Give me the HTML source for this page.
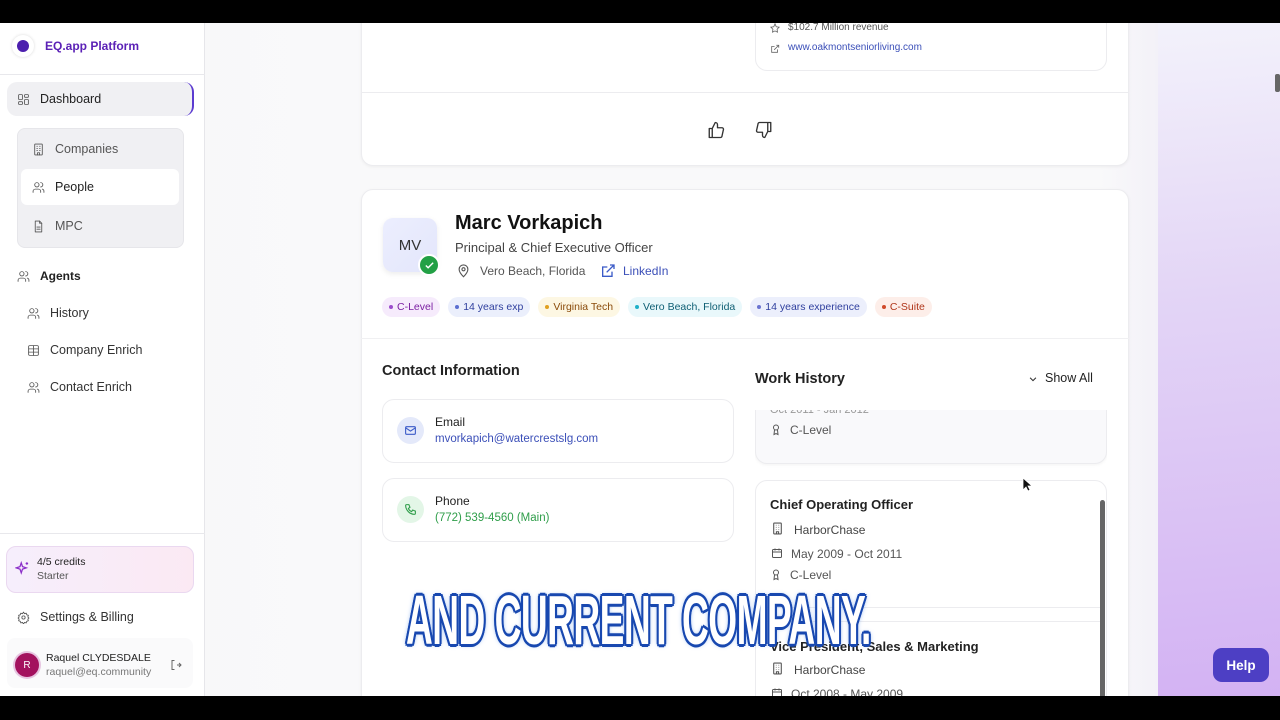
<!DOCTYPE html>
<html><head><meta charset="utf-8"><style>
*{box-sizing:border-box;margin:0;padding:0}
body{width:1280px;height:720px;overflow:hidden;background:#000;font-family:"Liberation Sans",sans-serif;position:relative;color:#111}
.abs{position:absolute}
#app{position:absolute;left:0;top:23px;width:1280px;height:673px;overflow:hidden;background:linear-gradient(90deg,#f7f7f8 0,#f9f9fa 330px,#f9f9fa 1100px,#f3f1f8 1158px)}
#right{position:absolute;left:1158px;top:0;width:122px;height:673px;background:linear-gradient(175deg,#f3f2fb 0%,#e3d5f6 40%,#d3b2f3 100%)}
#side{position:absolute;left:0;top:0;width:205px;height:673px;background:#fff;border-right:1px solid #e6e6ea}
.nav{position:absolute;display:flex;align-items:center;font-size:12.5px;color:#333}
.nav svg{margin-right:10px}
.card{position:absolute;background:#fff;border:1px solid #ececef;border-radius:12px;box-shadow:0 1px 3px rgba(0,0,0,.05)}
.tag{display:inline-flex;align-items:center;height:20px;padding:0 7px;border-radius:10px;font-size:10.5px;margin-right:8px}
.tag i{width:4px;height:4px;border-radius:50%;display:inline-block;margin-right:4px}
.ic{stroke:#555;fill:none;stroke-width:1.6;stroke-linecap:round;stroke-linejoin:round}
.cap{position:absolute;left:406px;top:584px;font-family:"Liberation Sans",sans-serif;font-weight:bold;font-size:70px;line-height:72px;color:#fff;letter-spacing:-1px;transform:scaleX(0.53);transform-origin:left;white-space:nowrap;
text-shadow:4px 0 #1848b0,-4px 0 #1848b0,0 3px #1848b0,0 -3px #1848b0,3px 2px #1848b0,-3px -2px #1848b0,3px -2px #1848b0,-3px 2px #1848b0,0 0 7px #3a7ae0}
</style></head><body>
<div id="app">
<div id="right"></div>
<div id="side">
  <div class="abs" style="left:12px;top:12px;width:22px;height:22px;border-radius:50%;background:#fff;box-shadow:0 0 3px rgba(0,0,0,.15);display:flex;align-items:center;justify-content:center"><div style="width:12px;height:12px;border-radius:50%;background:#4c1fae"></div></div>
  <div class="abs" style="left:45px;top:16px;font-size:12px;font-weight:bold;color:#5b21b6">EQ.app Platform</div>
  <div class="abs" style="left:0;top:51px;width:205px;border-top:1px solid #e8e8ec"></div>
  <div class="abs" style="left:7px;top:59px;width:187px;height:34px;background:#f0f0f3;border-radius:10px;border-right:2px solid #5b3bd0"></div>
  <div class="nav" style="left:17px;top:69px;color:#222"><svg width="13" height="13" viewBox="0 0 24 24" class="ic"><rect x="3" y="3" width="7" height="9" rx="1"/><rect x="14" y="3" width="7" height="5" rx="1"/><rect x="14" y="12" width="7" height="9" rx="1"/><rect x="3" y="16" width="7" height="5" rx="1"/></svg>Dashboard</div>
  <div class="abs" style="left:17px;top:105px;width:167px;height:120px;background:#f0f0f3;border:1px solid #e6e6ea;border-radius:8px"></div>
  <div class="abs" style="left:21px;top:146px;width:158px;height:36px;background:#fff;border-radius:6px"></div>
  <div class="nav" style="left:32px;top:119px;color:#555"><svg width="13" height="13" viewBox="0 0 24 24" class="ic"><rect x="5" y="2" width="14" height="20" rx="1"/><path d="M9 6h1M14 6h1M9 10h1M14 10h1M9 14h1M14 14h1M10 22v-4h4v4"/></svg>Companies</div>
  <div class="nav" style="left:32px;top:157px;color:#222"><svg width="13" height="13" viewBox="0 0 24 24" class="ic"><circle cx="9" cy="7" r="4"/><path d="M2 21v-2a4 4 0 0 1 4-4h6a4 4 0 0 1 4 4v2M16 3a4 4 0 0 1 0 8M22 21v-2a4 4 0 0 0-3-4"/></svg>People</div>
  <div class="nav" style="left:32px;top:196px;color:#555"><svg width="13" height="13" viewBox="0 0 24 24" class="ic"><path d="M14 2H6v20h12V6z"/><path d="M14 2v4h4M9 13h6M9 17h6"/></svg>MPC</div>
  <div class="nav" style="left:17px;top:246px;color:#222;font-weight:bold;font-size:12px"><svg width="13" height="13" viewBox="0 0 24 24" class="ic"><circle cx="9" cy="7" r="4"/><path d="M2 21v-2a4 4 0 0 1 4-4h6a4 4 0 0 1 4 4v2M16 3a4 4 0 0 1 0 8M22 21v-2a4 4 0 0 0-3-4"/></svg>Agents</div>
  <div class="nav" style="left:27px;top:283px"><svg width="13" height="13" viewBox="0 0 24 24" class="ic"><circle cx="9" cy="7" r="4"/><path d="M2 21v-2a4 4 0 0 1 4-4h6a4 4 0 0 1 4 4v2M16 3a4 4 0 0 1 0 8M22 21v-2a4 4 0 0 0-3-4"/></svg>History</div>
  <div class="nav" style="left:27px;top:320px"><svg width="13" height="13" viewBox="0 0 24 24" class="ic"><rect x="3" y="3" width="18" height="18" rx="2"/><path d="M3 9h18M3 15h18M12 3v18"/></svg>Company Enrich</div>
  <div class="nav" style="left:27px;top:357px"><svg width="13" height="13" viewBox="0 0 24 24" class="ic"><circle cx="9" cy="7" r="4"/><path d="M2 21v-2a4 4 0 0 1 4-4h6a4 4 0 0 1 4 4v2M16 3a4 4 0 0 1 0 8M22 21v-2a4 4 0 0 0-3-4"/></svg>Contact Enrich</div>
  <div class="abs" style="left:0;top:510px;width:205px;border-top:1px solid #e8e8ec"></div>
  <div class="abs" style="left:6px;top:523px;width:188px;height:47px;border-radius:10px;background:linear-gradient(90deg,#f6eefc,#fbe9f3);border:1px solid #ead8f0"></div>
  <svg class="abs" style="left:15px;top:538px" width="15" height="15" viewBox="0 0 24 24" fill="none" stroke="#8b2fc9" stroke-width="2"><path d="M10 3l2 6 6 2-6 2-2 6-2-6-6-2 6-2zM19 2v4M17 4h4"/></svg>
  <div class="abs" style="left:37px;top:533px;font-size:10.5px;color:#222">4/5 credits</div>
  <div class="abs" style="left:37px;top:547px;font-size:10.5px;color:#555">Starter</div>
  <div class="nav" style="left:17px;top:587px"><svg width="13" height="13" viewBox="0 0 24 24" class="ic"><circle cx="12" cy="12" r="3"/><path d="M12 2l2 3 3-1 1 3 3 1-1 3 2 2-2 2 1 3-3 1-1 3-3-1-2 3-2-3-3 1-1-3-3-1 1-3-2-2 2-2-1-3 3-1 1-3 3 1z"/></svg>Settings &amp; Billing</div>
  <div class="abs" style="left:7px;top:615px;width:186px;height:50px;background:#fafafb;border-radius:8px"></div>
  <div class="abs" style="left:15px;top:630px;width:24px;height:24px;border-radius:50%;background:#a3115e;box-shadow:0 0 0 2px #e7c5e1;color:#fff;font-size:10px;display:flex;align-items:center;justify-content:center">R</div>
  <div class="abs" style="left:46px;top:629px;font-size:10.5px;color:#222">Raquel CLYDESDALE</div>
  <div class="abs" style="left:46px;top:643px;font-size:10.5px;color:#777">raquel@eq.community</div>
  <svg class="abs" style="left:170px;top:636px" width="12" height="12" viewBox="0 0 24 24" fill="none" stroke="#666" stroke-width="2"><path d="M9 3H4v18h5M14 12h8M18 8l4 4-4 4"/></svg>
</div>

<div class="card" style="left:361px;top:-20px;width:768px;height:163px;border-top:none"></div>
<div class="abs" style="left:361px;top:69px;width:768px;border-top:1px solid #ececef"></div>
<div class="card" style="left:755px;top:-20px;width:352px;height:68px;box-shadow:none"></div>
<svg class="abs" style="left:770px;top:0" width="10" height="10" viewBox="0 0 24 24" fill="none" stroke="#666" stroke-width="2"><path d="M12 2l3 7 7 1-5 5 1 7-6-3-6 3 1-7-5-5 7-1z"/></svg>
<div class="abs" style="left:788px;top:-1px;font-size:10px;color:#555">$102.7 Million revenue</div>
<svg class="abs" style="left:770px;top:21px" width="10" height="10" viewBox="0 0 24 24" fill="none" stroke="#666" stroke-width="2"><path d="M18 13v7H4V6h7M15 3h6v6M10 14L21 3"/></svg>
<div class="abs" style="left:788px;top:19px;font-size:10px;color:#3b4fb8">www.oakmontseniorliving.com</div>
<svg class="abs" style="left:707px;top:98px" width="18" height="18" viewBox="0 0 24 24" fill="none" stroke="#333" stroke-width="1.8" stroke-linejoin="round"><path d="M7 10v12H3V10zM7 10l4-8a3 3 0 0 1 3 3v4h6a2 2 0 0 1 2 2l-2 9a2 2 0 0 1-2 2H7"/></svg>
<svg class="abs" style="left:755px;top:98px" width="18" height="18" viewBox="0 0 24 24" fill="none" stroke="#333" stroke-width="1.8" stroke-linejoin="round"><path d="M17 14V2h4v12zM17 14l-4 8a3 3 0 0 1-3-3v-4H4a2 2 0 0 1-2-2l2-9a2 2 0 0 1 2-2h11"/></svg>

<div class="card" style="left:361px;top:166px;width:768px;height:560px"></div>
<div class="abs" style="left:383px;top:195px;width:54px;height:54px;border-radius:10px;background:linear-gradient(135deg,#eceefe,#e3e6fb);box-shadow:0 2px 6px rgba(0,0,0,.08);font-size:15px;color:#333;display:flex;align-items:center;justify-content:center">MV</div>
<div class="abs" style="left:418px;top:231px;width:22px;height:22px;border-radius:50%;background:#22a045;border:2px solid #fff;display:flex;align-items:center;justify-content:center"><svg width="11" height="11" viewBox="0 0 24 24" fill="none" stroke="#fff" stroke-width="3"><path d="M4 12l5 5 11-11"/></svg></div>
<div class="abs" style="left:455px;top:189px;font-size:20px;font-weight:bold;color:#111">Marc Vorkapich</div>
<div class="abs" style="left:455px;top:217px;font-size:13px;color:#444">Principal &amp; Chief Executive Officer</div>
<svg class="abs" style="left:456px;top:240px" width="15" height="15" viewBox="0 0 24 24" fill="none" stroke="#555" stroke-width="1.8"><path d="M12 22s7-7 7-12a7 7 0 0 0-14 0c0 5 7 12 7 12z"/><circle cx="12" cy="10" r="2.5"/></svg>
<div class="abs" style="left:480px;top:241px;font-size:12px;color:#555">Vero Beach, Florida</div>
<svg class="abs" style="left:600px;top:240px" width="16" height="16" viewBox="0 0 24 24" fill="none" stroke="#3b5bc8" stroke-width="2"><path d="M18 13v7H4V6h7M15 3h6v6M10 14L21 3"/></svg>
<div class="abs" style="left:623px;top:241px;font-size:12px;color:#3b4fb8">LinkedIn</div>
<div class="abs" style="left:382px;top:274px;display:flex">
<span class="tag" style="background:#f6ebfc;color:#7b1fa2"><i style="background:#9c4dcc"></i>C-Level</span>
<span class="tag" style="background:#ebeffc;color:#2f3f9e"><i style="background:#5b6fd0"></i>14 years exp</span>
<span class="tag" style="background:#fdf7e3;color:#8a4b0a"><i style="background:#e0a020"></i>Virginia Tech</span>
<span class="tag" style="background:#e9f8fb;color:#0e5f74"><i style="background:#1fb0c8"></i>Vero Beach, Florida</span>
<span class="tag" style="background:#eceffc;color:#2f3f9e"><i style="background:#6b74d0"></i>14 years experience</span>
<span class="tag" style="background:#fdeee9;color:#b0361a"><i style="background:#d04a2a"></i>C-Suite</span>
</div>
<div class="abs" style="left:361px;top:315px;width:768px;border-top:1px solid #f0f0f2"></div>
<div class="abs" style="left:382px;top:340px;font-size:14.5px;font-weight:bold;color:#222">Contact Information</div>
<div class="card" style="left:382px;top:376px;width:352px;height:64px;box-shadow:none"></div>
<div class="abs" style="left:397px;top:394px;width:27px;height:27px;border-radius:50%;background:#e4e9fa;display:flex;align-items:center;justify-content:center"><svg width="13" height="13" viewBox="0 0 24 24" fill="none" stroke="#3b5bc8" stroke-width="2"><rect x="3" y="5" width="18" height="14" rx="2"/><path d="M3 7l9 6 9-6"/></svg></div>
<div class="abs" style="left:435px;top:392px;font-size:12px;color:#222">Email</div>
<div class="abs" style="left:435px;top:410px;font-size:11.5px;color:#3b4fb8">mvorkapich@watercrestslg.com</div>
<div class="card" style="left:382px;top:455px;width:352px;height:64px;box-shadow:none"></div>
<div class="abs" style="left:397px;top:473px;width:27px;height:27px;border-radius:50%;background:#e3f6e7;display:flex;align-items:center;justify-content:center"><svg width="13" height="13" viewBox="0 0 24 24" fill="none" stroke="#2f9e4a" stroke-width="2"><path d="M5 3h4l2 5-3 2a11 11 0 0 0 6 6l2-3 5 2v4a2 2 0 0 1-2 2A17 17 0 0 1 3 5a2 2 0 0 1 2-2z"/></svg></div>
<div class="abs" style="left:435px;top:471px;font-size:12px;color:#222">Phone</div>
<div class="abs" style="left:435px;top:489px;font-size:11.5px;color:#2f9e4a">(772) 539-4560 (Main)</div>

<div class="abs" style="left:755px;top:348px;font-size:14.5px;font-weight:bold;color:#222">Work History</div>
<svg class="abs" style="left:1028px;top:351px" width="10" height="10" viewBox="0 0 24 24" fill="none" stroke="#333" stroke-width="2.5"><path d="M5 9l7 7 7-7"/></svg>
<div class="abs" style="left:1045px;top:348px;font-size:12.5px;color:#222">Show All</div>
<div class="abs" style="left:755px;top:387px;width:352px;height:286px;overflow:hidden">
  <div class="card" style="left:0;top:-60px;width:352px;height:114px;background:#f9f9fb"></div>
  <div class="abs" style="left:15px;top:-6px;font-size:11px;color:#999">Oct 2011 - Jan 2012</div>
  <svg class="abs" style="left:15px;top:13px" width="12" height="13" viewBox="0 0 24 24" fill="none" stroke="#555" stroke-width="2"><circle cx="12" cy="8" r="5"/><path d="M9 13l-1 9 4-2 4 2-1-9"/></svg>
  <div class="abs" style="left:35px;top:13px;font-size:12px;color:#555">C-Level</div>
  <div class="card" style="left:0;top:70px;width:352px;height:260px;box-shadow:none"></div>
  <div class="abs" style="left:0;top:197px;width:345px;border-top:1px solid #ececef"></div>
  <div class="abs" style="left:15px;top:87px;font-size:13px;font-weight:bold;color:#222">Chief Operating Officer</div>
  <svg class="abs" style="left:16px;top:111px" width="13" height="15" viewBox="0 0 24 24" fill="none" stroke="#555" stroke-width="2"><rect x="5" y="2" width="14" height="20" rx="1"/><path d="M9 6h1M14 6h1M9 10h1M14 10h1M9 14h1M14 14h1M10 22v-4h4v4"/></svg>
  <div class="abs" style="left:39px;top:113px;font-size:12px;color:#444">HarborChase</div>
  <svg class="abs" style="left:16px;top:137px" width="12" height="12" viewBox="0 0 24 24" fill="none" stroke="#555" stroke-width="2"><rect x="3" y="5" width="18" height="16" rx="2"/><path d="M3 10h18M8 3v4M16 3v4"/></svg>
  <div class="abs" style="left:36px;top:137px;font-size:12px;color:#555">May 2009 - Oct 2011</div>
  <svg class="abs" style="left:15px;top:158px" width="12" height="13" viewBox="0 0 24 24" fill="none" stroke="#555" stroke-width="2"><circle cx="12" cy="8" r="5"/><path d="M9 13l-1 9 4-2 4 2-1-9"/></svg>
  <div class="abs" style="left:35px;top:158px;font-size:12px;color:#555">C-Level</div>
  <div class="abs" style="left:0;top:211px;width:345px;border-top:1px solid #ececef"></div>
  <div class="abs" style="left:15px;top:229px;font-size:13px;font-weight:bold;color:#222">Vice President, Sales &amp; Marketing</div>
  <svg class="abs" style="left:16px;top:251px" width="13" height="15" viewBox="0 0 24 24" fill="none" stroke="#555" stroke-width="2"><rect x="5" y="2" width="14" height="20" rx="1"/><path d="M9 6h1M14 6h1M9 10h1M14 10h1M9 14h1M14 14h1M10 22v-4h4v4"/></svg>
  <div class="abs" style="left:39px;top:253px;font-size:12px;color:#444">HarborChase</div>
  <svg class="abs" style="left:16px;top:277px" width="12" height="12" viewBox="0 0 24 24" fill="none" stroke="#555" stroke-width="2"><rect x="3" y="5" width="18" height="16" rx="2"/><path d="M3 10h18M8 3v4M16 3v4"/></svg>
  <div class="abs" style="left:36px;top:277px;font-size:12px;color:#555">Oct 2008 - May 2009</div>
  <div class="abs" style="left:345px;top:90px;width:5px;height:200px;background:#666;border-radius:3px"></div>
</div>
<div class="abs" style="left:1275px;top:51px;width:5px;height:18px;background:#666;border-radius:2px"></div>
<svg class="abs" style="left:1022px;top:454px" width="10" height="15" viewBox="0 0 10 15"><path d="M1 1v12l3-3 2 4 2-1-2-4h4z" fill="#111" stroke="#fff" stroke-width="0.8"/></svg>
<div class="abs" style="left:1213px;top:625px;width:56px;height:34px;border-radius:9px;background:#4d3fc4;color:#fff;font-size:13.5px;font-weight:bold;display:flex;align-items:center;justify-content:center">Help</div>
</div>
<div class="cap">AND CURRENT COMPANY.</div>
</body></html>
